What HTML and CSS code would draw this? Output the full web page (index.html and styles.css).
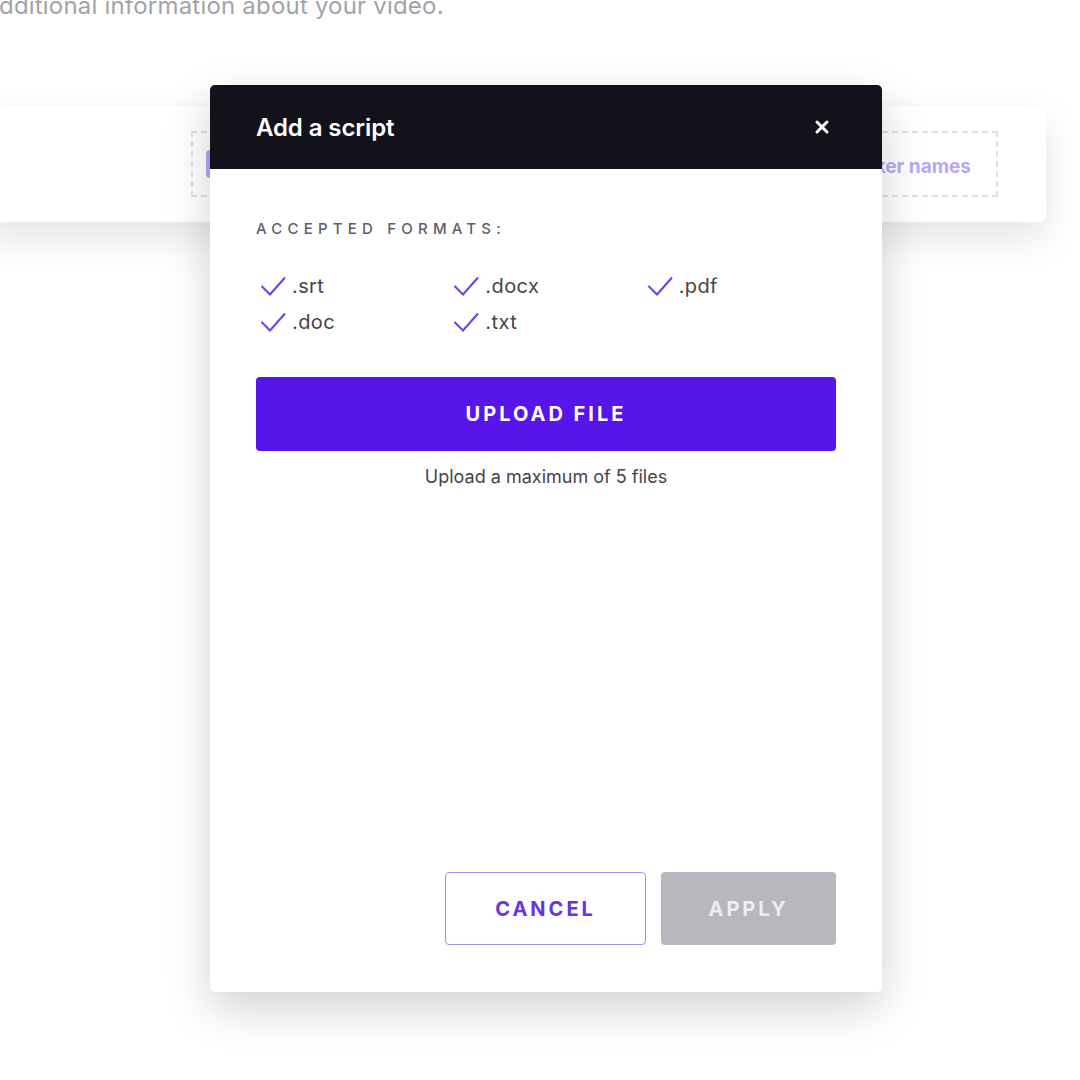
FILE: index.html
```html
<!DOCTYPE html>
<html lang="en">
<head>
<meta charset="utf-8">
<title>Add a script</title>
<link rel="stylesheet" href="styles.css">
</head>
<body>
<div class="page">
  <p class="intro">dditional information about your video.</p>
  <div class="card">
    <div class="dropzone">
      <span class="chip"></span>
      <span class="drop-label">Add speaker names</span>
    </div>
  </div>
</div>

<div class="modal" role="dialog" aria-labelledby="modal-title">
  <div class="modal-header">
    <h2 id="modal-title" class="modal-title">Add a script</h2>
    <button class="close" aria-label="Close">
      <svg width="16" height="16" viewBox="0 0 16 16"><path d="M3 3 L13 13 M13 3 L3 13" stroke="#fff" stroke-width="3" stroke-linecap="round"/></svg>
    </button>
  </div>
  <div class="modal-body">
    <div class="formats-label">ACCEPTED FORMATS:</div>
    <ul class="formats">
      <li><svg class="check" width="26" height="20" viewBox="0 0 26 20"><path d="M1.5 10 L10 18.5 L25 1.5" fill="none" stroke="#6a3ef0" stroke-width="2"/></svg>.srt</li>
      <li><svg class="check" width="26" height="20" viewBox="0 0 26 20"><path d="M1.5 10 L10 18.5 L25 1.5" fill="none" stroke="#6a3ef0" stroke-width="2"/></svg>.docx</li>
      <li><svg class="check" width="26" height="20" viewBox="0 0 26 20"><path d="M1.5 10 L10 18.5 L25 1.5" fill="none" stroke="#6a3ef0" stroke-width="2"/></svg>.pdf</li>
      <li><svg class="check" width="26" height="20" viewBox="0 0 26 20"><path d="M1.5 10 L10 18.5 L25 1.5" fill="none" stroke="#6a3ef0" stroke-width="2"/></svg>.doc</li>
      <li><svg class="check" width="26" height="20" viewBox="0 0 26 20"><path d="M1.5 10 L10 18.5 L25 1.5" fill="none" stroke="#6a3ef0" stroke-width="2"/></svg>.txt</li>
    </ul>
    <button class="upload">UPLOAD FILE</button>
    <p class="hint">Upload a maximum of 5 files</p>
  </div>
  <div class="modal-footer">
    <button class="btn cancel">CANCEL</button>
    <button class="btn apply" disabled>APPLY</button>
  </div>
</div>
</body>
</html>
```

FILE: styles.css
```css
* { box-sizing: border-box; }
html, body { margin: 0; padding: 0; background: #fff; }
body {
  font-family: Inter, "Noto Sans", "Liberation Sans", sans-serif;
  width: 1080px;
  height: 1080px;
  overflow: hidden;
  position: relative;
}
.page { display: flex; flex-direction: column; }
.intro {
  margin: -9px 0 0 -1px;
  font-size: 24px;
  line-height: 30px;
  letter-spacing: 0.2px;
  color: #a2a2a9;
}
.card {
  margin: 85px 0 0 -20px;
  width: 1066px;
  height: 116px;
  background: #fff;
  border-radius: 6px;
  box-shadow: 0 16px 40px rgba(0,0,0,0.11);
  display: flex;
  align-items: center;
  justify-content: flex-end;
  padding-right: 48px;
}
.dropzone {
  width: 807px;
  height: 66px;
  border: 2px dashed #e0e0e4;
  display: flex;
  align-items: center;
  justify-content: space-between;
  padding: 4px 25px 0 13px;
}
.chip {
  width: 20px;
  height: 28px;
  margin-top: -4px;
  border-radius: 4px;
  background: #b8a3f6;
}
.drop-label {
  font-size: 19px;
  font-weight: 700;
  color: #b9a7f6;
}
.modal {
  position: absolute;
  left: 210px;
  top: 85px;
  width: 672px;
  height: 907px;
  background: #fff;
  border-radius: 5px;
  box-shadow: 0 16px 46px rgba(0,0,0,0.18);
  display: flex;
  flex-direction: column;
  overflow: hidden;
}
.modal-header {
  height: 84px;
  background: #13111a;
  display: flex;
  align-items: center;
  justify-content: space-between;
  padding: 0 52px 0 46px;
}
.modal-title {
  margin: 0;
  color: #fff;
  font-size: 24px;
  font-weight: 600;
  letter-spacing: -0.1px;
}
.close {
  background: none;
  border: 0;
  padding: 0;
  width: 16px;
  height: 16px;
  display: flex;
}
.modal-body {
  padding: 50px 46px 0;
  display: flex;
  flex-direction: column;
}
.formats-label {
  font-size: 15px;
  line-height: 20px;
  font-weight: 500;
  letter-spacing: 5.2px;
  color: #5e5e68;
}
.formats {
  list-style: none;
  margin: 35px 0 0;
  padding: 0;
  display: grid;
  grid-template-columns: repeat(3, 1fr);
  row-gap: 12px;
}
.formats li {
  display: flex;
  align-items: center;
  gap: 6px;
  padding-left: 4px;
  font-size: 20px;
  line-height: 24px;
  letter-spacing: 0.4px;
  color: #44444c;
}
.check { flex: none; }
.upload {
  margin-top: 43px;
  height: 74px;
  border: 0;
  border-radius: 4px;
  background: #5714eb;
  color: #fff;
  font-family: inherit;
  font-size: 20px;
  font-weight: 700;
  letter-spacing: 3px;
}
.hint {
  margin: 16px 0 0;
  text-align: center;
  font-size: 18px;
  line-height: 20px;
  color: #44444c;
}
.modal-footer {
  margin-top: auto;
  padding: 0 46px 47px;
  display: flex;
  justify-content: flex-end;
  gap: 15px;
}
.btn {
  height: 73px;
  border-radius: 4px;
  font-family: inherit;
  font-size: 20px;
  font-weight: 700;
  letter-spacing: 3px;
}
.cancel {
  width: 201px;
  background: #fff;
  border: 1.5px solid #a98bf7;
  color: #6633e6;
}
.apply {
  width: 175px;
  background: #b8b7bd;
  border: 0;
  color: #eeeef1;
}
```
